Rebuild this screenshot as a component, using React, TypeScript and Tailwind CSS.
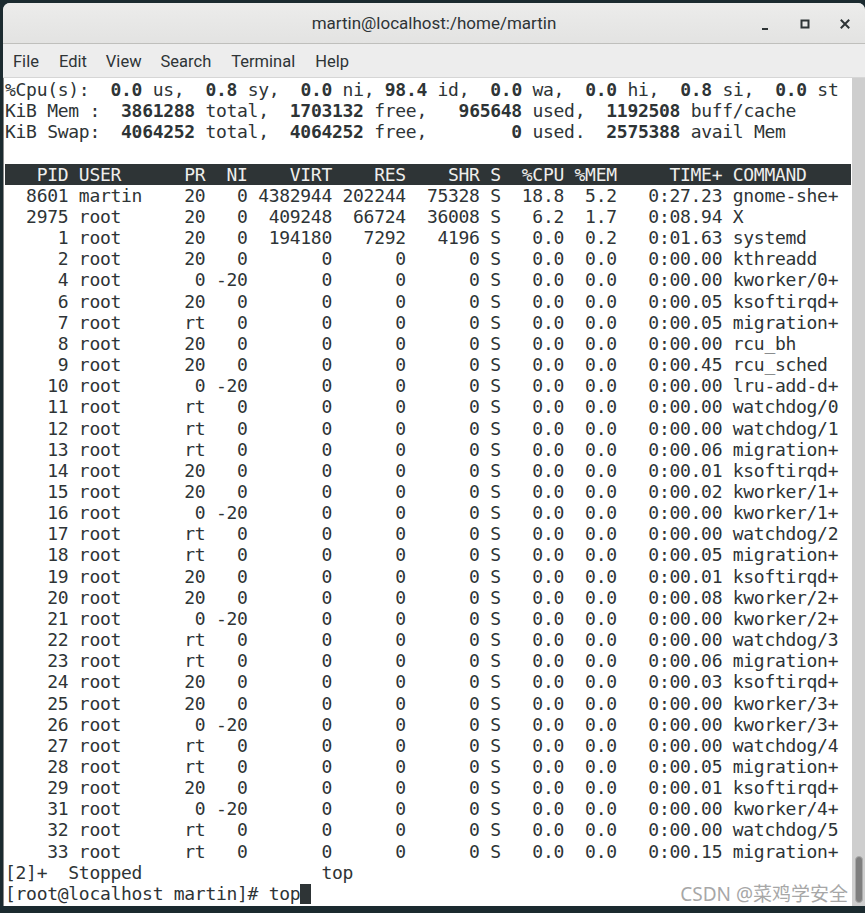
import React from "react";

type Proc = [string, string, string, string, string, string, string, string, string, string, string, string];

const procs: Proc[] = [
  ["8601", "martin", "20", "0", "4382944", "202244", "75328", "S", "18.8", "5.2", "0:27.23", "gnome-she+"],
  ["2975", "root", "20", "0", "409248", "66724", "36008", "S", "6.2", "1.7", "0:08.94", "X"],
  ["1", "root", "20", "0", "194180", "7292", "4196", "S", "0.0", "0.2", "0:01.63", "systemd"],
  ["2", "root", "20", "0", "0", "0", "0", "S", "0.0", "0.0", "0:00.00", "kthreadd"],
  ["4", "root", "0", "-20", "0", "0", "0", "S", "0.0", "0.0", "0:00.00", "kworker/0+"],
  ["6", "root", "20", "0", "0", "0", "0", "S", "0.0", "0.0", "0:00.05", "ksoftirqd+"],
  ["7", "root", "rt", "0", "0", "0", "0", "S", "0.0", "0.0", "0:00.05", "migration+"],
  ["8", "root", "20", "0", "0", "0", "0", "S", "0.0", "0.0", "0:00.00", "rcu_bh"],
  ["9", "root", "20", "0", "0", "0", "0", "S", "0.0", "0.0", "0:00.45", "rcu_sched"],
  ["10", "root", "0", "-20", "0", "0", "0", "S", "0.0", "0.0", "0:00.00", "lru-add-d+"],
  ["11", "root", "rt", "0", "0", "0", "0", "S", "0.0", "0.0", "0:00.00", "watchdog/0"],
  ["12", "root", "rt", "0", "0", "0", "0", "S", "0.0", "0.0", "0:00.00", "watchdog/1"],
  ["13", "root", "rt", "0", "0", "0", "0", "S", "0.0", "0.0", "0:00.06", "migration+"],
  ["14", "root", "20", "0", "0", "0", "0", "S", "0.0", "0.0", "0:00.01", "ksoftirqd+"],
  ["15", "root", "20", "0", "0", "0", "0", "S", "0.0", "0.0", "0:00.02", "kworker/1+"],
  ["16", "root", "0", "-20", "0", "0", "0", "S", "0.0", "0.0", "0:00.00", "kworker/1+"],
  ["17", "root", "rt", "0", "0", "0", "0", "S", "0.0", "0.0", "0:00.00", "watchdog/2"],
  ["18", "root", "rt", "0", "0", "0", "0", "S", "0.0", "0.0", "0:00.05", "migration+"],
  ["19", "root", "20", "0", "0", "0", "0", "S", "0.0", "0.0", "0:00.01", "ksoftirqd+"],
  ["20", "root", "20", "0", "0", "0", "0", "S", "0.0", "0.0", "0:00.08", "kworker/2+"],
  ["21", "root", "0", "-20", "0", "0", "0", "S", "0.0", "0.0", "0:00.00", "kworker/2+"],
  ["22", "root", "rt", "0", "0", "0", "0", "S", "0.0", "0.0", "0:00.00", "watchdog/3"],
  ["23", "root", "rt", "0", "0", "0", "0", "S", "0.0", "0.0", "0:00.06", "migration+"],
  ["24", "root", "20", "0", "0", "0", "0", "S", "0.0", "0.0", "0:00.03", "ksoftirqd+"],
  ["25", "root", "20", "0", "0", "0", "0", "S", "0.0", "0.0", "0:00.00", "kworker/3+"],
  ["26", "root", "0", "-20", "0", "0", "0", "S", "0.0", "0.0", "0:00.00", "kworker/3+"],
  ["27", "root", "rt", "0", "0", "0", "0", "S", "0.0", "0.0", "0:00.00", "watchdog/4"],
  ["28", "root", "rt", "0", "0", "0", "0", "S", "0.0", "0.0", "0:00.05", "migration+"],
  ["29", "root", "20", "0", "0", "0", "0", "S", "0.0", "0.0", "0:00.01", "ksoftirqd+"],
  ["31", "root", "0", "-20", "0", "0", "0", "S", "0.0", "0.0", "0:00.00", "kworker/4+"],
  ["32", "root", "rt", "0", "0", "0", "0", "S", "0.0", "0.0", "0:00.00", "watchdog/5"],
  ["33", "root", "rt", "0", "0", "0", "0", "S", "0.0", "0.0", "0:00.15", "migration+"],
];

// top column widths
const fmt = (r: string[]) =>
  [
    r[0].padStart(6),
    r[1].padEnd(8),
    r[2].padStart(3),
    r[3].padStart(3),
    r[4].padStart(7),
    r[5].padStart(6),
    r[6].padStart(6),
    r[7],
    r[8].padStart(5),
    r[9].padStart(4),
    r[10].padStart(9),
    r[11],
  ].join(" ");

const header = fmt(["PID", "USER", "PR", "NI", "VIRT", "RES", "SHR", "S", "%CPU", "%MEM", "TIME+", "COMMAND"]);

// summary lines: [text, bold] pieces
const summary: [string, boolean][][] = [
  [
    ["%Cpu(s):  ", false], ["0.0", true], [" us,  ", false], ["0.8", true], [" sy,  ", false],
    ["0.0", true], [" ni, ", false], ["98.4", true], [" id,  ", false], ["0.0", true],
    [" wa,  ", false], ["0.0", true], [" hi,  ", false], ["0.8", true], [" si,  ", false],
    ["0.0", true], [" st", false],
  ],
  [
    ["KiB Mem :  ", false], ["3861288", true], [" total,  ", false], ["1703132", true],
    [" free,   ", false], ["965648", true], [" used,  ", false], ["1192508", true], [" buff/cache", false],
  ],
  [
    ["KiB Swap:  ", false], ["4064252", true], [" total,  ", false], ["4064252", true],
    [" free,        ", false], ["0", true], [" used.  ", false], ["2575388", true], [" avail Mem", false],
  ],
];

const App: React.FC = () => {
  return (
    <div className="w-[865px] h-[913px] bg-[#1b2a2f] pt-[3px] pl-[3px] overflow-hidden">
      <div className="flex flex-col h-[903px] rounded-t-[7px] overflow-hidden bg-[#ededed]">
        {/* Title bar */}
        <div className="relative flex items-center justify-center h-[41px] pt-[2px] bg-gradient-to-b from-[#ececeb] to-[#e3e3e2] border-b border-[#bfbfbc] text-[#2e3436] font-['Roboto',sans-serif] text-[17px]">
          <span>martin@localhost:/home/martin</span>
          <div className="absolute right-0 top-0 h-full flex items-center pt-[2px]">
            <svg width="12" height="12" viewBox="0 0 12 12" className="mr-[28px] mt-[4px]">
              <rect x="3" y="8" width="6" height="2" fill="#2e3436" />
            </svg>
            <svg width="12" height="12" viewBox="0 0 12 12" className="mr-[28px]">
              <rect x="2.5" y="2.5" width="7" height="7" fill="none" stroke="#2e3436" strokeWidth="2" />
            </svg>
            <svg width="12" height="12" viewBox="0 0 12 12" className="mr-[14px]">
              <path d="M2.5 2.5 L9.5 9.5 M9.5 2.5 L2.5 9.5" stroke="#2e3436" strokeWidth="2" strokeLinecap="square" />
            </svg>
          </div>
        </div>

        {/* Menu bar */}
        <div className="flex items-center h-[34px] pt-[3px] bg-[#ededed] border-b border-[#d6d6d6] pl-[10px] text-[#2e3436] font-['Roboto',sans-serif] text-[16.5px]">
          <span className="mr-[20px]">File</span>
          <span className="mr-[19px]">Edit</span>
          <span className="mr-[19px]">View</span>
          <span className="mr-[20px]">Search</span>
          <span className="mr-[20px]">Terminal</span>
          <span>Help</span>
        </div>

        {/* Terminal body */}
        <div className="flex flex-1 min-h-0 border-l border-[#8a8a8a]">
          <div className="relative flex-1 bg-white overflow-hidden pt-[1px] pl-[1px] font-['DejaVu_Sans_Mono',monospace] text-[18px] tracking-[-0.29px] leading-[21.15px] text-[#2e3436] whitespace-pre">
            {summary.map((line, i) => (
              <div key={i}>
                {line.map(([t, b], j) => (
                  <span key={j} className={b ? "font-bold" : ""}>{t}</span>
                ))}
              </div>
            ))}
            <div>&nbsp;</div>
            <div className="bg-[#2e3436] text-[#eeeeec] mr-[1px]">{header}</div>
            {procs.map((p, i) => (
              <div key={i}>{fmt(p)}</div>
            ))}
            <div>{"[2]+  Stopped                 top"}</div>
            <div>
              {"[root@localhost martin]# top"}
              <span className="inline-block w-[10.5px] h-[20px] align-[-4px] bg-[#2e3436]" />
            </div>

            {/* watermark */}
            <div className="absolute right-[4px] bottom-[1px] font-['Noto_Sans','Noto_Sans_CJK_SC',sans-serif] text-[19px] tracking-normal text-[#a7a7a7]">
              CSDN @菜鸡学安全
            </div>
          </div>

          {/* Scrollbar */}
          <div className="w-[13px] bg-[#cecece] flex flex-col justify-end pb-[3px] pl-[3px] pr-[2px]">
            <div className="h-[47px] rounded-full bg-[#7e7e7e] border border-[#a9a9a9]" />
          </div>
        </div>
      </div>
    </div>
  );
};

export default App;
